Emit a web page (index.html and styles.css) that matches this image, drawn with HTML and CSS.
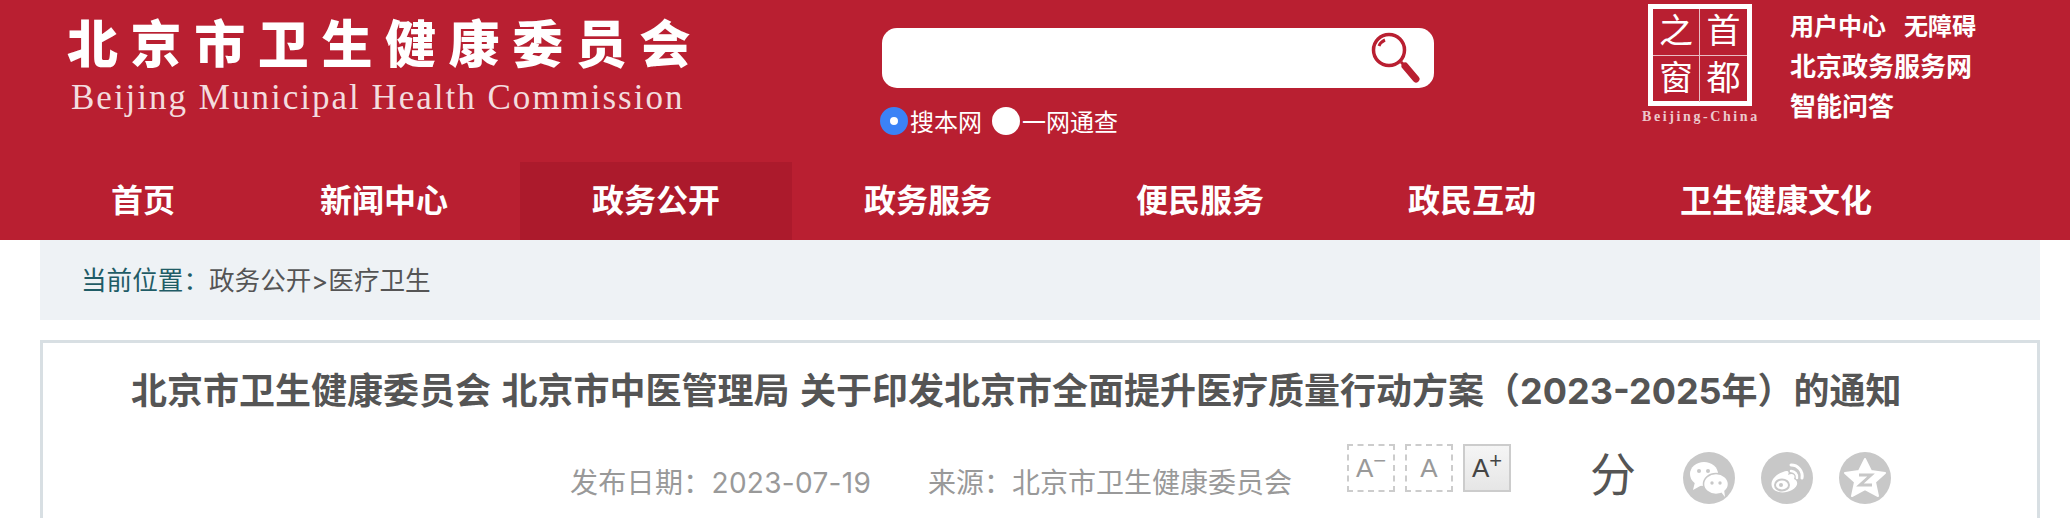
FILE: index.html
```html
<!DOCTYPE html>
<html lang="zh-CN">
<head>
  <meta charset="UTF-8" />
  <meta name="viewport" content="width=device-width, initial-scale=1.0" />
  <title>北京市卫生健康委员会</title>
  <link rel="stylesheet" href="styles.css">
</head>
<body>
  <header class="header">
    <div class="top">
      <div class="logo">
        <div class="logo-cn">北京市卫生健康委员会</div>
        <div class="logo-en">Beijing Municipal Health Commission</div>
      </div>

      <div class="search">
        <div class="search-box">
          <svg class="search-icon" viewBox="0 0 50 54" width="50" height="54">
            <circle cx="19" cy="19" r="15.5" fill="none" stroke="#b91f31" stroke-width="3.5" />
            <path d="M9 15 A11 11 0 0 1 15 9" fill="none" stroke="#b91f31" stroke-width="3" />
            <path d="M31 31 L36 36" stroke="#b91f31" stroke-width="3" />
            <path d="M35 35 L46 48" stroke="#b91f31" stroke-width="7" stroke-linecap="round" />
          </svg>
        </div>
        <div class="search-scope">
          <span class="radio radio-on"></span><span class="radio-text">搜本网</span>
          <span class="radio"></span><span class="radio-text">一网通查</span>
        </div>
      </div>

      <div class="capital">
        <div class="capital-seal">
          <span>之</span><span>首</span><span>窗</span><span>都</span>
        </div>
        <div class="capital-en">Beijing-China</div>
      </div>

      <div class="links">
        <div class="links-small"><a>用户中心</a><a>无障碍</a></div>
        <div><a>北京政务服务网</a></div>
        <div><a>智能问答</a></div>
      </div>
    </div>

    <nav class="nav">
      <a class="nav-first">首页</a>
      <a>新闻中心</a>
      <a class="active">政务公开</a>
      <a>政务服务</a>
      <a>便民服务</a>
      <a>政民互动</a>
      <a>卫生健康文化</a>
    </nav>
  </header>

  <div class="crumb">
    <span class="crumb-label">当前位置：</span>政务公开&gt;医疗卫生
  </div>

  <main class="article">
    <h1 class="title">北京市卫生健康委员会 北京市中医管理局 关于印发北京市全面提升医疗质量行动方案（2023-2025年）的通知</h1>
    <div class="meta">
      <span class="meta-date">发布日期：2023-07-19</span>
      <span class="meta-source">来源：北京市卫生健康委员会</span>
      <div class="sizes">
        <span class="size">A<sup>−</sup></span>
        <span class="size">A</span>
        <span class="size size-on">A<sup>+</sup></span>
      </div>
      <span class="share-label">分</span>
      <div class="share">
        <span class="share-item">
          <svg viewBox="0 0 52 52" width="52" height="52">
            <ellipse cx="21" cy="22" rx="14" ry="12" fill="#fff" />
            <path d="M12 30 L10 38 L19 33 Z" fill="#fff" />
            <ellipse cx="33" cy="32" rx="12.5" ry="10.5" fill="#fff" stroke="#c8c8c8" stroke-width="1.5" />
            <path d="M38 40 L42 45 L41 37 Z" fill="#fff" />
            <circle cx="16" cy="19" r="2" fill="#c8c8c8" />
            <circle cx="25" cy="19" r="2" fill="#c8c8c8" />
            <circle cx="29" cy="31" r="1.7" fill="#c8c8c8" />
            <circle cx="37" cy="31" r="1.7" fill="#c8c8c8" />
          </svg>
        </span>
        <span class="share-item">
          <svg viewBox="0 0 52 52" width="52" height="52">
            <path d="M22 20 C13 23 9 30 11 35 C13 41 24 42 31 38 C37 35 38 29 33 27 C35 22 31 21 27 23 C29 19 26 18 22 20 Z" fill="#fff" />
            <ellipse cx="21" cy="33" rx="7" ry="5.5" fill="none" stroke="#c8c8c8" stroke-width="2" />
            <circle cx="20" cy="33" r="2" fill="#c8c8c8" />
            <path d="M30 13 A11 11 0 0 1 41 26" fill="none" stroke="#fff" stroke-width="3" stroke-linecap="round" />
            <path d="M30 19 A6 6 0 0 1 36 26" fill="none" stroke="#fff" stroke-width="2.5" stroke-linecap="round" />
          </svg>
        </span>
        <span class="share-item">
          <svg viewBox="0 0 52 52" width="52" height="52">
            <path d="M26 7 L32 19 L46 21 L36 30 L39 44 L26 37 L13 44 L16 30 L6 21 L20 19 Z" fill="#fff" stroke="#fff" stroke-width="2" stroke-linejoin="round" />
            <path d="M20 23 H32 L21 33 H33" fill="none" stroke="#c8c8c8" stroke-width="3" />
          </svg>
        </span>
      </div>
    </div>
  </main>
</body>
</html>
```

FILE: styles.css
```css
html, body {
  height: 518px;
  overflow: hidden;
}

body {
  margin: 0;
  padding: 0;
  background: #fff;
  font-family: "Noto Sans CJK SC", "Liberation Sans", sans-serif;
  color: #555;
}

.header {
  background: #b91f31;
  color: #fff;
}

.top {
  display: flex;
  height: 162px;
}

.logo {
  width: 882px;
  padding-left: 67px;
  box-sizing: border-box;
}

.logo-cn {
  margin-top: 4px;
  font-size: 51px;
  line-height: 74px;
  font-weight: 900;
  letter-spacing: 12.6px;
  white-space: nowrap;
}

.logo-en {
  padding-left: 4px;
  font-family: "Liberation Serif", serif;
  font-size: 35px;
  line-height: 40px;
  letter-spacing: 2px;
  color: #f3dcdf;
  white-space: nowrap;
}

.search {
  width: 766px;
}

.search-box {
  display: flex;
  justify-content: flex-end;
  width: 552px;
  height: 60px;
  margin-top: 28px;
  padding: 3px 14px 0 0;
  box-sizing: border-box;
  background: #fff;
  border-radius: 15px;
}

.search-scope {
  display: flex;
  align-items: center;
  height: 28px;
  margin-top: 19px;
  margin-left: -2px;
}

.radio {
  width: 28px;
  height: 28px;
  border-radius: 50%;
  background: #fff;
  box-sizing: border-box;
}

.radio-on {
  border: 10px solid #3b82f6;
}

.radio-text {
  margin: 0 10px 0 2px;
  font-size: 24px;
  line-height: 26px;
}

.capital {
  width: 142px;
}

.capital-seal {
  display: grid;
  grid-template-columns: 1fr 1fr;
  grid-template-rows: 1fr 1fr;
  width: 104px;
  height: 102px;
  margin-top: 4px;
  box-sizing: border-box;
  border: 5px solid #fff;
  font-family: "Liberation Serif", "Noto Sans CJK SC", serif;
  font-size: 34px;
  line-height: 46px;
  text-align: center;
}

.capital-seal span:nth-child(odd) {
  border-right: 1px solid #e9bcc2;
}

.capital-seal span:nth-child(-n+2) {
  border-bottom: 1px solid #e9bcc2;
}

.capital-en {
  width: 120px;
  margin: 3px 0 0 -6px;
  font-family: "Liberation Serif", serif;
  font-weight: bold;
  font-size: 14px;
  line-height: 16px;
  letter-spacing: 2.6px;
  color: #edc9cd;
  white-space: nowrap;
}

.links {
  padding-top: 5px;
  font-size: 26px;
  line-height: 40px;
  font-weight: 700;
  white-space: nowrap;
}

.links-small {
  display: flex;
  gap: 18px;
  font-size: 24px;
}

.nav {
  display: flex;
  height: 78px;
  padding-left: 38px;
  font-size: 32px;
  line-height: 72px;
  font-weight: 700;
}

.nav a {
  width: 272px;
  text-align: center;
}

.nav .nav-first {
  width: 210px;
}

.nav .active {
  background: #ac1a2c;
}

.nav a:last-child {
  width: 336px;
}

.crumb {
  height: 80px;
  margin: 0 30px 0 40px;
  padding-left: 41px;
  background: #eef2f5;
  font-family: "Inter", "Noto Sans CJK SC", sans-serif;
  font-size: 25.6px;
  line-height: 82px;
  color: #555;
}

.crumb-label {
  color: #1f5c66;
}

.article {
  height: 200px;
  margin: 20px 30px 0 40px;
  box-sizing: border-box;
  border: 3px solid #d8dfe3;
}

.title {
  margin: 0;
  padding: 22px 0 0 88px;
  font-family: "Inter", "Noto Sans CJK SC", sans-serif;
  font-size: 36px;
  line-height: 52px;
  font-weight: 700;
  word-spacing: 2px;
  color: #555;
  white-space: nowrap;
}

.meta {
  display: flex;
  align-items: flex-start;
  margin-top: 27px;
  padding-left: 527px;
  font-family: "Inter", "Noto Sans CJK SC", sans-serif;
  color: #999;
  font-size: 28px;
  line-height: 36px;
}

.meta-date {
  width: 358px;
  margin-top: 21px;
  letter-spacing: 0.3px;
  white-space: nowrap;
}

.meta-source {
  width: 419px;
  margin-top: 21px;
  white-space: nowrap;
}

.sizes {
  display: flex;
  gap: 10px;
  width: 243px;
}

.size {
  display: flex;
  justify-content: center;
  align-items: center;
  width: 48px;
  height: 48px;
  box-sizing: border-box;
  border: 2px dashed #ccc;
  font-family: "Liberation Sans", sans-serif;
  font-size: 26px;
  color: #999;
}

.size sup {
  font-size: 22px;
  line-height: 10px;
  margin-top: -14px;
  vertical-align: baseline;
}

.size-on {
  border: 2px solid #ccc;
  background: linear-gradient(#f5f5f5, #e6e6e6);
  color: #444;
}

.share-label {
  width: 93px;
  font-size: 46px;
  line-height: 60px;
  color: #555;
}

.share {
  display: flex;
  gap: 26px;
  margin-top: 8px;
}

.share-item {
  width: 52px;
  height: 52px;
  border-radius: 50%;
  background: #c8c8c8;
}

.share-item svg {
  display: block;
}
```
